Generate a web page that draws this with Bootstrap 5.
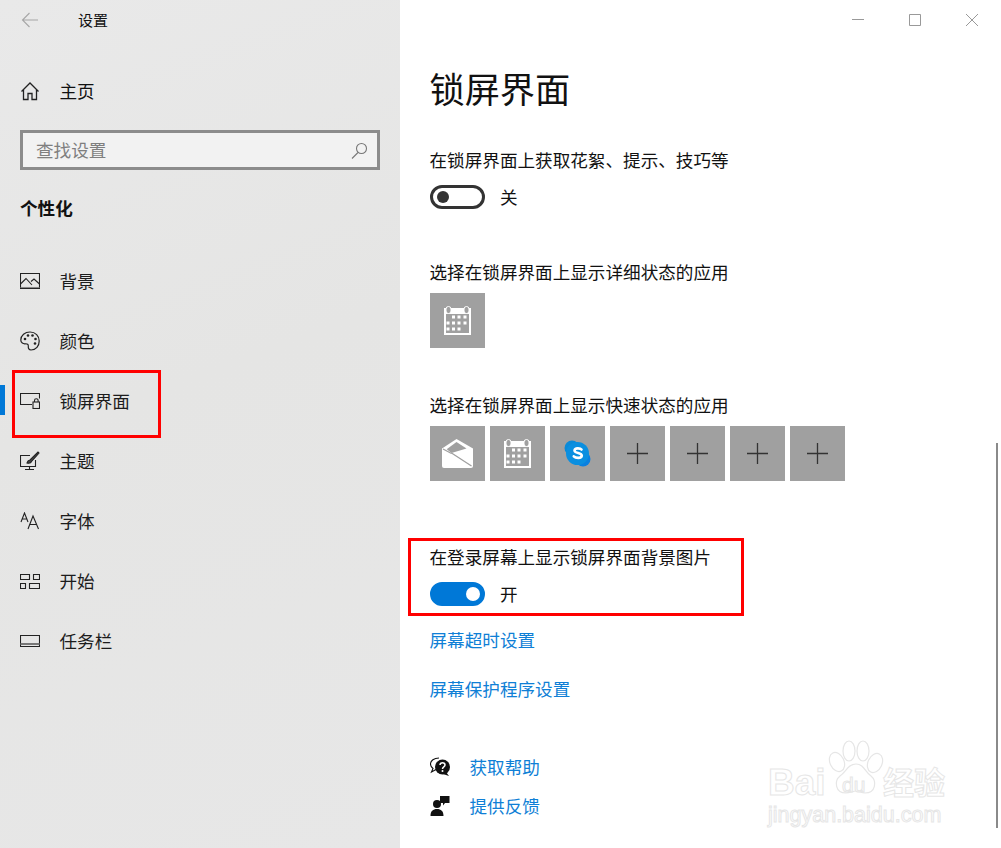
<!DOCTYPE html>
<html lang="zh-CN">
<head>
<meta charset="utf-8">
<title>设置</title>
<link href="https://cdn.jsdelivr.net/npm/bootstrap@5.3.0/dist/css/bootstrap.min.css" rel="stylesheet">
<style>
html,body{height:848px;overflow:hidden;background:#fff}
body{font-family:"Noto Sans CJK SC","Liberation Sans",sans-serif;font-size:17.6px;line-height:24px;color:#111}
svg{display:block;flex:none}
.shell{width:1001px;height:848px}
.side{width:400px;height:848px;background:linear-gradient(160deg,#e9e9e9,#e5e5e4 45%,#e7e7e7)}
.top-bar{height:39px;padding-left:21px}
.top-title{font-size:15px;margin-left:39px}
.home-row{height:60px;margin-top:22px;padding-left:20px}
.label-gap{margin-left:19.5px}
.search-box{height:40px;margin:9px 20px 0;padding:0 9px 0 13px;border:3px solid #8c8c8c;background:#f2f2f2;color:#7f7f7f}
.group-name{height:24px;margin:26px 0 31px 20px;font-weight:700}
.nav-row{height:60px;padding-left:20px;color:#1c1c1c}
.nav-on{position:relative}
.on-bar{position:absolute;left:0;top:14px;width:5px;height:30px;background:#0078d7}
.red-note{position:absolute;border:3px solid #f00;pointer-events:none}
.note-nav{left:12px;top:-1px;width:149px;height:68px}
.main-pane{position:relative;width:601px;height:848px;padding-left:30px}
.win-btns{position:absolute;right:23px;top:14px;gap:45px}
.page-title{font-size:35.2px;line-height:50px;font-weight:400;margin:63px 0 0 -.5px;height:50px}
.opt-label{height:24px;line-height:24px;margin-left:-.5px}
.switch-row{height:24px;gap:15px}
.tgl{width:55px;height:24px;border-radius:12px;border:3px solid #333;padding:0 4px;display:flex;align-items:center}
.tgl i{display:block;width:12px;height:12px;border-radius:50%;background:#333}
.tgl-on{background:#0078d7;border-color:#0078d7;justify-content:flex-end;padding:0 2px}
.tgl-on i{background:#fff;width:14px;height:14px}
.tile{width:55px;height:55px;background:#a0a0a0}
.app-link{color:#0f7fd6;text-decoration:none}
.help-row{height:24px;gap:19.5px}
.note-login{left:8px;top:538px;width:336px;height:78px}
.scroll-thumb{position:absolute;right:3px;top:443px;width:2px;height:385px;background:#8a8a8a}
.wm{position:absolute;left:768px;top:738px;width:190px;height:92px;color:#fff;-webkit-text-stroke:1px #e6e6e6;font-family:"Liberation Sans",sans-serif}
.wm-bai{position:absolute;left:0;top:23px;font-size:37px;line-height:44px;font-weight:700}
.wm-du{position:absolute;left:74px;top:37px;font-size:21px;line-height:20px}
.wm-jy{position:absolute;left:115px;top:25px;font-size:31px;line-height:36px;font-family:"Noto Sans CJK SC",sans-serif;font-weight:700}
.wm-url{position:absolute;left:0;top:64px;font-size:21.5px;line-height:26px}
.wm svg{position:absolute;left:46px;top:2px}
.gap-tiles{gap:5px}
.section-a{margin-top:35px}
.sw-a{margin-top:13px}
.sec-b{margin-top:51px}
.sec-b-tile{margin-top:9px}
.sec-c{margin-top:45px}
.sec-c-tiles{margin-top:9px}
.sec-d{margin-top:64px}
.sec-d-sw{margin-top:13px}
.sec-e{margin-top:22px}
.sec-f{margin-top:25px}
.sec-g{margin-top:54px}
.sec-h{margin-top:15px}
</style>
</head>
<body>
<div class="shell d-flex position-relative">
  <aside class="side flex-shrink-0">
    <div class="top-bar d-flex align-items-center">
      <svg width="18" height="16" viewBox="0 0 18 16" fill="none" stroke="#a6a6a6" stroke-width="1.1"><path d="M17 8H1.5M8.500 1 1.500 8l7 7"/></svg>
      <span class="top-title">设置</span>
    </div>
    <div class="home-row d-flex align-items-center">
      <svg width="20" height="20" viewBox="0 0 20 20" fill="none" stroke="#222" stroke-width="1.3"><path d="M1.500 10.500 10 2l8.500 8.500M3.500 8.500V18.500H8V12.500H12V18.500H16.500V8.500"/></svg>
      <span class="label-gap">主页</span>
    </div>
    <div class="search-box d-flex align-items-center justify-content-between">
      <span>查找设置</span>
      <svg width="17" height="17" viewBox="0 0 17 17" fill="none" stroke="#777" stroke-width="1.100"><circle cx="10.500" cy="6.500" r="5"/><path d="M7 10.500 1 16.500"/></svg>
    </div>
    <div class="group-name">个性化</div>

    <div class="nav-row d-flex align-items-center">
      <svg width="20" height="16" viewBox="0 0 20 16" fill="none" stroke="#222" stroke-width="1.100"><path d="M.5.500h19v15H.5z"/><path d="M.5 11 6 5.500l6 6.500M11 8.500 14 6l5.500 5"/><path d="M.5 14.500h19" stroke="#888"/></svg>
      <span class="label-gap">背景</span>
    </div>
    <div class="nav-row d-flex align-items-center">
      <svg width="20" height="20" viewBox="0 0 20 20" fill="none" stroke="#222" stroke-width="1.200"><path d="M10 1C5 1 .8 4.500.8 9c0 3 2.500 4 4.500 3.800 2-.2 3.200.6 3 2.500-.2 2 .6 3.700 2.700 3.700 5 0 8.200-4 8.200-9S15.500 1 10 1z"/><g fill="#222" stroke="none"><circle cx="5" cy="8" r="1.300"/><circle cx="8" cy="4.500" r="1.300"/><circle cx="12.500" cy="4.500" r="1.300"/><circle cx="15.500" cy="8" r="1.300"/><circle cx="15" cy="12.500" r="1.300"/></g></svg>
      <span class="label-gap">颜色</span>
    </div>
    <div class="nav-row nav-on d-flex align-items-center">
      <span class="on-bar"></span>
      <svg width="20" height="16" viewBox="0 0 20 16" fill="none" stroke="#222" stroke-width="1.100"><path d="M12 11.500H.5V.5h19v5"/><rect x="13" y="9" width="6.500" height="6.500"/><path d="M14.500 9V7.500a1.800 1.800 0 0 1 3.600 0V9"/></svg>
      <span class="label-gap">锁屏界面</span>
      <span class="red-note note-nav"></span>
    </div>
    <div class="nav-row d-flex align-items-center">
      <svg width="20" height="20" viewBox="0 0 20 20" fill="none" stroke="#222" stroke-width="1.100"><path d="M10 4.500H.5v11h15V9M9.500 15.500v3M5 18.500h9"/><path d="M7 12c.5-2 1.500-2.800 3-3l8-8 1 1-7.500 8.500C11 12 9 12.500 7 12z" fill="#444"/></svg>
      <span class="label-gap">主题</span>
    </div>
    <div class="nav-row d-flex align-items-center">
      <svg width="20" height="18" viewBox="0 0 20 18" fill="none" stroke="#222" stroke-width="1.100"><path d="M1 10 4.500 1 8 10M2.200 7h4.600M8 17 13 4l5.500 13M9.800 12.500h7"/></svg>
      <span class="label-gap">字体</span>
    </div>
    <div class="nav-row d-flex align-items-center">
      <svg width="20" height="15" viewBox="0 0 20 15" fill="none" stroke="#222" stroke-width="1.100"><path d="M.5.500h9v5h-9zM13.500.500h6v5h-6zM.5 9.500h5v5h-5zM9.500 9.500h10v5h-10z"/></svg>
      <span class="label-gap">开始</span>
    </div>
    <div class="nav-row d-flex align-items-center">
      <svg width="20" height="12" viewBox="0 0 20 12" fill="none" stroke="#222" stroke-width="1.100"><path d="M.5.500h19v11H.5z"/><path d="M.5 9h19" stroke-width="2" stroke="#777"/></svg>
      <span class="label-gap">任务栏</span>
    </div>
  </aside>

  <main class="main-pane">
    <div class="win-btns d-flex align-items-center">
      <svg width="12" height="12" viewBox="0 0 12 12" fill="none" stroke="#999"><path d="M0 5.500h12"/></svg>
      <svg width="12" height="12" viewBox="0 0 12 12" fill="none" stroke="#999"><path d="M.5.500h11v11H.5z"/></svg>
      <svg width="12" height="12" viewBox="0 0 12 12" fill="none" stroke="#999"><path d="M0 0 12 12M12 0 0 12"/></svg>
    </div>
    <h1 class="page-title">锁屏界面</h1>

    <div class="opt-label section-a">在锁屏界面上获取花絮、提示、技巧等</div>
    <div class="switch-row d-flex align-items-center sw-a">
      <span class="tgl"><i></i></span><span>关</span>
    </div>

    <div class="opt-label sec-b">选择在锁屏界面上显示详细状态的应用</div>
    <div class="tile d-flex align-items-center justify-content-center sec-b-tile">
      <svg width="27" height="29" viewBox="0 0 27 29"><path fill="#fff" d="M0 2h27v27H0z"/><path fill="#a0a0a0" d="M2 8h23v19H2z"/><rect x="2" y=".5" width="5" height="7" rx="2.500" fill="#a0a0a0" stroke="#fff"/><rect x="20" y=".5" width="5" height="7" rx="2.500" fill="#a0a0a0" stroke="#fff"/><path fill="#fff" d="M8 9.500h3v3H8zM13.500 9.500h3v3h-3zM19.500 9.500h3v3h-3zM2.500 15.500h3v3h-3zM8 15.500h3v3H8zM13.500 15.500h3v3h-3zM19.500 15.500h3v3h-3zM2.500 21.500h3v3h-3zM8 21.500h3v3H8zM13.500 21.500h3v3h-3z"/></svg>
    </div>

    <div class="opt-label sec-c">选择在锁屏界面上显示快速状态的应用</div>
    <div class="d-flex gap-tiles sec-c-tiles">
      <div class="tile d-flex align-items-center justify-content-center">
        <svg width="32" height="29" viewBox="0 0 32 29"><path fill="#fff" d="M14.500 0 31 9.500V27a2 2 0 0 1-2 2H2a2 2 0 0 1-2-2V9.500z"/><path fill="#a0a0a0" d="M14.500 3 24.500 9.500 9.500 14 4.700 10.300z"/><path fill="none" stroke="#a0a0a0" stroke-width="1.300" d="M9.500 14 29.500 27M1 10l8.500 4.500"/></svg>
      </div>
      <div class="tile d-flex align-items-center justify-content-center">
        <svg width="27" height="29" viewBox="0 0 27 29"><path fill="#fff" d="M0 2h27v27H0z"/><path fill="#a0a0a0" d="M2 8h23v19H2z"/><rect x="2" y=".5" width="5" height="7" rx="2.500" fill="#a0a0a0" stroke="#fff"/><rect x="20" y=".5" width="5" height="7" rx="2.500" fill="#a0a0a0" stroke="#fff"/><path fill="#fff" d="M8 9.500h3v3H8zM13.500 9.500h3v3h-3zM19.500 9.500h3v3h-3zM2.500 15.500h3v3h-3zM8 15.500h3v3H8zM13.500 15.500h3v3h-3zM19.500 15.500h3v3h-3zM2.500 21.500h3v3h-3zM8 21.500h3v3H8zM13.500 21.500h3v3h-3z"/></svg>
      </div>
      <div class="tile d-flex align-items-center justify-content-center">
        <svg width="27" height="27" viewBox="0 0 27 27"><circle cx="8" cy="8" r="7.500" fill="#0a8ad8"/><circle cx="19" cy="19" r="7.500" fill="#0a80e0"/><circle cx="13.500" cy="13.500" r="11.500" fill="#0b8fe0"/><path fill="none" stroke="#fff" stroke-width="2.600" stroke-linecap="round" d="M17.500 9.500c-1-1.300-6.800-2-7 1 .2 3.300 7.300 1.800 7.300 5.200-.2 3-6.300 2.500-8 .6"/></svg>
      </div>
      <div class="tile d-flex align-items-center justify-content-center"><svg width="21" height="21" viewBox="0 0 21 21" stroke="#333" stroke-width="1.300"><path d="M0 10.500h21M10.500 0v21"/></svg></div>
      <div class="tile d-flex align-items-center justify-content-center"><svg width="21" height="21" viewBox="0 0 21 21" stroke="#333" stroke-width="1.300"><path d="M0 10.500h21M10.500 0v21"/></svg></div>
      <div class="tile d-flex align-items-center justify-content-center"><svg width="21" height="21" viewBox="0 0 21 21" stroke="#333" stroke-width="1.300"><path d="M0 10.500h21M10.500 0v21"/></svg></div>
      <div class="tile d-flex align-items-center justify-content-center"><svg width="21" height="21" viewBox="0 0 21 21" stroke="#333" stroke-width="1.300"><path d="M0 10.500h21M10.500 0v21"/></svg></div>
    </div>

    <div class="opt-label sec-d">在登录屏幕上显示锁屏界面背景图片</div>
    <div class="switch-row d-flex align-items-center sec-d-sw">
      <span class="tgl tgl-on"><i></i></span><span>开</span>
    </div>

    <div class="opt-label sec-e"><a class="app-link" href="#">屏幕超时设置</a></div>
    <div class="opt-label sec-f"><a class="app-link" href="#">屏幕保护程序设置</a></div>

    <div class="help-row d-flex align-items-center sec-g">
      <svg width="20" height="20" viewBox="0 0 20 20"><path fill="none" stroke="#111" stroke-width="1.100" d="M9 1C4 1 .5 3.500.5 7c0 2 1 3.500 2.500 4.500L1.500 15 6 12.500"/><circle cx="12.500" cy="10" r="7.500" fill="#111"/><path fill="#111" d="M16 15l3 4-6-2z"/><path fill="none" stroke="#fff" stroke-width="1.500" d="M10 8c0-3 5-3 5 0 0 2-2.500 1.800-2.500 4"/><circle cx="12.500" cy="14" r="1" fill="#fff"/></svg>
      <a class="app-link" href="#">获取帮助</a>
    </div>
    <div class="help-row d-flex align-items-center sec-h">
      <svg width="20" height="20" viewBox="0 0 20 20" fill="#111"><circle cx="7" cy="8" r="4"/><path d="M.500 20c0-5 2.500-7 6.500-7s6.500 2 6.500 7zM10 0h9.500v7H15l-2 2.500V7h-3z"/></svg>
      <a class="app-link" href="#">提供反馈</a>
    </div>

    <span class="red-note note-login"></span>
    <span class="scroll-thumb"></span>
  </main>

  <div class="wm">
    <svg width="80" height="60" viewBox="0 0 80 60" fill="#fff" stroke="#e6e6e6" stroke-width="1.200"><ellipse cx="23" cy="22" rx="7" ry="10" transform="rotate(-25 23 22)"/><ellipse cx="35" cy="11" rx="6" ry="10"/><ellipse cx="49" cy="11" rx="6" ry="10"/><ellipse cx="61" cy="23" rx="7" ry="10" transform="rotate(25 61 23)"/><path d="M42 24c8 0 9 8 15 12 6 5 5 17-6 17-4 0-6-2-9-2s-6 2-10 2c-11 0-12-12-6-17 6-4 8-12 16-12z"/></svg>
    <span class="wm-bai">Bai</span>
    <span class="wm-du">du</span>
    <span class="wm-jy">经验</span>
    <span class="wm-url">jingyan.baidu.com</span>
  </div>
</div>
</body>
</html>
